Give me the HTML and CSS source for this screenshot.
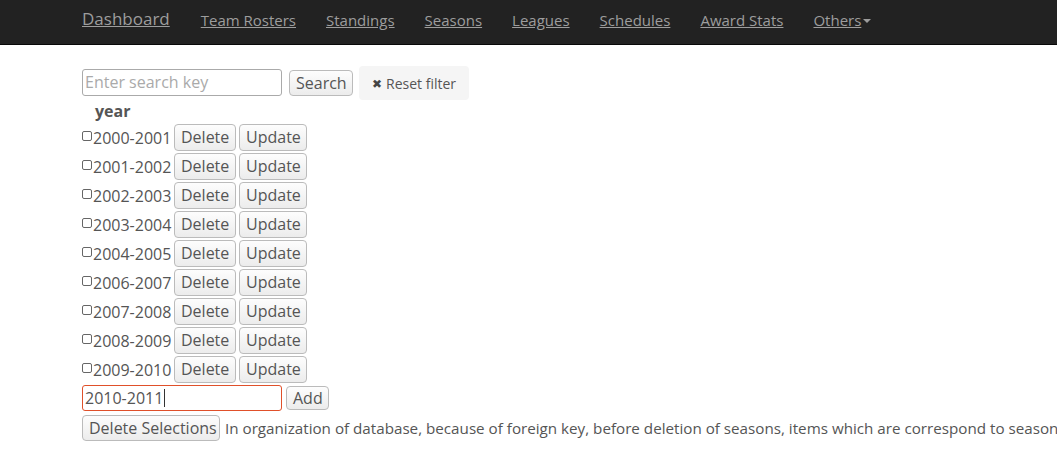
FILE: index.html
```html
<!DOCTYPE html>
<html>
<head>
<meta charset="utf-8">
<title>Seasons</title>
<link rel="stylesheet" href="styles.css">
</head>
<body>
<nav class="navbar">
  <a class="brand" href="#">Dashboard</a>
  <a class="nav-link" href="#">Team Rosters</a>
  <a class="nav-link" href="#">Standings</a>
  <a class="nav-link" href="#">Seasons</a>
  <a class="nav-link" href="#">Leagues</a>
  <a class="nav-link" href="#">Schedules</a>
  <a class="nav-link" href="#">Award Stats</a>
  <a class="nav-link" href="#">Others<span class="caret"></span></a>
</nav>
<main class="main">
  <div class="search-row">
    <input class="text-input" type="text" placeholder="Enter search key">
    <button class="btn btn-search">Search</button>
    <button class="reset"><span class="reset-icon">✖</span>Reset filter</button>
  </div>
  <div class="col-head">year</div>
  <div class="list">
    <div class="row"><span class="check"></span><span class="year">2000-2001</span><button class="btn">Delete</button><button class="btn">Update</button></div>
    <div class="row"><span class="check"></span><span class="year">2001-2002</span><button class="btn">Delete</button><button class="btn">Update</button></div>
    <div class="row"><span class="check"></span><span class="year">2002-2003</span><button class="btn">Delete</button><button class="btn">Update</button></div>
    <div class="row"><span class="check"></span><span class="year">2003-2004</span><button class="btn">Delete</button><button class="btn">Update</button></div>
    <div class="row"><span class="check"></span><span class="year">2004-2005</span><button class="btn">Delete</button><button class="btn">Update</button></div>
    <div class="row"><span class="check"></span><span class="year">2006-2007</span><button class="btn">Delete</button><button class="btn">Update</button></div>
    <div class="row"><span class="check"></span><span class="year">2007-2008</span><button class="btn">Delete</button><button class="btn">Update</button></div>
    <div class="row"><span class="check"></span><span class="year">2008-2009</span><button class="btn">Delete</button><button class="btn">Update</button></div>
    <div class="row"><span class="check"></span><span class="year">2009-2010</span><button class="btn">Delete</button><button class="btn">Update</button></div>
  </div>
  <div class="add-row">
    <div class="text-input focus"><span>2010-2011</span><span class="cursor"></span></div>
    <button class="btn btn-add">Add</button>
  </div>
  <div class="footer-row">
    <button class="btn btn-delsel">Delete Selections</button>
    <span class="note">In organization of database, because of foreign key, before deletion of seasons, items which are correspond to seasons must be deleted.</span>
  </div>
</main>
</body>
</html>
```
FILE: styles.css
```css
html, body {
  margin: 0;
  padding: 0;
  overflow: hidden;
  background: #fff;
}
body {
  font-family: "Open Sans", "DejaVu Sans", sans-serif;
  color: #555;
  font-size: 16px;
}
.navbar {
  height: 39px;
  padding-bottom: 5px;
  background: #222;
  border-bottom: 1px solid #080808;
  display: flex;
  align-items: center;
  padding-left: 82px;
  box-sizing: content-box;
}
.navbar a {
  color: #9d9d9d;
  text-decoration: underline;
  white-space: nowrap;
}
.brand {
  font-size: 17px;
  margin-right: 16px;
  position: relative;
  top: -1px;
}
.nav-link {
  font-size: 15px;
  padding: 0 15px;
}
.caret {
  display: inline-block;
  width: 0;
  height: 0;
  border-left: 4px solid transparent;
  border-right: 4px solid transparent;
  border-top: 4px solid #9d9d9d;
  vertical-align: middle;
  margin-left: 2px;
}
.main {
  padding: 21px 0 0 82px;
}
.search-row {
  display: flex;
  align-items: center;
  height: 34px;
}
.text-input {
  box-sizing: border-box;
  width: 200px;
  height: 27px;
  border: 1px solid #aaa;
  border-radius: 3px;
  font-family: "Open Sans", sans-serif;
  font-size: 16px;
  color: #555;
  padding: 0 2px;
  margin: 0;
  outline: none;
  position: relative;
  top: -1px;
}
.text-input::placeholder {
  color: #aaa;
}
.btn {
  box-sizing: border-box;
  height: 27px;
  font-family: "Open Sans", sans-serif;
  font-size: 16px;
  color: #555;
  background: linear-gradient(#fdfdfd, #ececec);
  border: 1px solid #bbb;
  border-radius: 4px;
  padding: 0 6px;
  margin: 0;
  line-height: 25px;
}
.btn-search {
  margin-left: 7px;
  height: 26px;
  width: 64px;
}
.reset {
  margin-left: 6px;
  height: 34px;
  background: #f5f5f5;
  border: none;
  border-radius: 4px;
  font-family: "Open Sans", sans-serif;
  font-size: 14px;
  color: #555;
  padding: 0 13px 0 13px;
  display: flex;
  align-items: center;
}
.reset-icon {
  font-size: 12px;
  margin-right: 4px;
  color: #444;
}
.col-head {
  font-weight: bold;
  padding-left: 13px;
  height: 22px;
  line-height: 22px;
}
.list {
  display: flex;
  flex-direction: column;
  gap: 2px;
  margin-top: 2px;
}
.row {
  display: flex;
  align-items: center;
  height: 27px;
  gap: 3px;
}
.check {
  width: 10px;
  height: 10px;
  border: 1px solid #666;
  border-radius: 2px;
  box-sizing: border-box;
  margin-right: -2px;
  margin-top: -3px;
}
.year {
  width: 78px;
  white-space: nowrap;
}
.row .btn {
  width: 62px;
}
.row .btn + .btn {
  width: 68px;
}
.add-row {
  display: flex;
  align-items: center;
  gap: 4px;
  margin-top: 2px;
  height: 26px;
}
.add-row .text-input {
  top: 0;
}
.focus {
  display: flex;
  align-items: center;
  border-color: #e0502a;
  height: 26px;
}
.cursor {
  display: inline-block;
  width: 1px;
  height: 18px;
  background: #333;
  margin-left: 1px;
}
.btn-add {
  height: 24px;
  line-height: 22px;
  width: 43px;
}
.footer-row {
  display: flex;
  align-items: center;
  margin-top: 4px;
  white-space: nowrap;
  gap: 5px;
}
.btn-delsel {
  height: 26px;
  width: 138px;
}
.note {
  white-space: nowrap;
  font-size: 15.2px;
}
```
